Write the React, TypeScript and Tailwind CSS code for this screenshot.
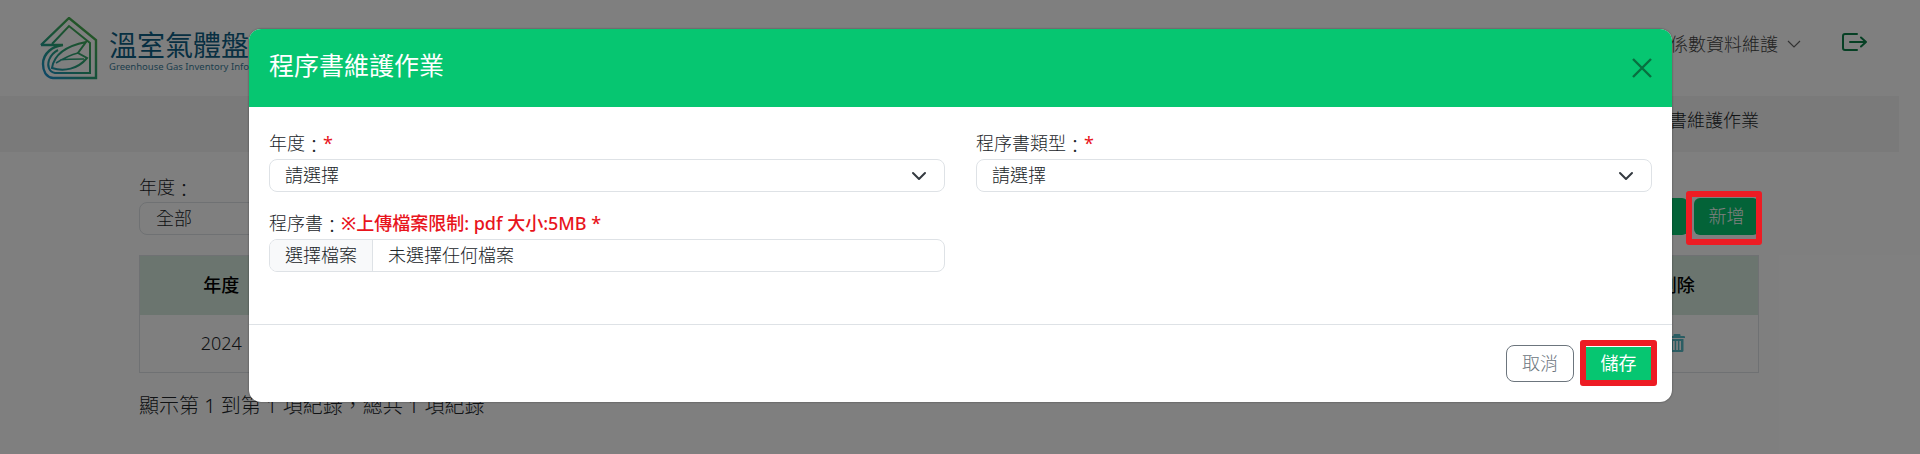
import React from "react";

function SelectChevron() {
  return (
    <svg viewBox="0 0 16 16" className="h-4 w-4 shrink-0" fill="none" stroke="#343a40" strokeWidth="2" strokeLinecap="round" strokeLinejoin="round">
      <path d="m2 5 6 6 6-6" />
    </svg>
  );
}

function Logo() {
  return (
    <svg viewBox="0 0 58 63" className="h-[63px] w-[58px] shrink-0" fill="none" strokeWidth="2">
      <defs>
        <linearGradient id="logoGrad" gradientUnits="userSpaceOnUse" x1="4" y1="60" x2="50" y2="6">
          <stop offset="0" stopColor="#1b8fd0" />
          <stop offset="0.45" stopColor="#2aa277" />
          <stop offset="1" stopColor="#4fae45" />
        </linearGradient>
      </defs>
      <path d="M1 28 L29 1 L56 23 V61 H13 C6 60 3 54 3 47 C3 36 13 29 23 28 L1 28" stroke="url(#logoGrad)" strokeWidth="2.400" />
      <path d="M12 27 L29 9 L50 26 V56 H15 C9 55 7 49 9 43 C11 38 14 35 18 33" stroke="url(#logoGrad)" />
      <path d="M12 51 C14 38 26 29 46 25 L38 36 L47 41 C38 52 24 55 12 51 Z" stroke="url(#logoGrad)" />
      <path d="M16 46 C24 41 30 38 38 36 M20 43 C28 42 36 42 44 42" stroke="url(#logoGrad)" strokeWidth="1.500" />
    </svg>
  );
}

// the colon sits lower in the reference than in the CJK font here
function Colon() {
  return <span className="inline-block translate-y-[3px]">：</span>;
}

function FormLabel({ children }: { children: React.ReactNode }) {
  return <label className="mb-[4px] block text-[18px] leading-[24px] text-[#212529]">{children}</label>;
}

function SelectBox() {
  return (
    <div className="flex h-[33px] items-center justify-between rounded-[8px] border border-[#dee2e6] bg-white pl-[15px] pr-[17px] text-[18px] text-[#212529]">
      <span>請選擇</span>
      <SelectChevron />
    </div>
  );
}

export default function App() {
  return (
    <div lang="zh-TW" className="relative h-[454px] w-[1920px] overflow-hidden bg-white font-['Noto_Sans','Noto_Sans_CJK_TC',sans-serif] font-light text-[#212529]">
      {/* page behind the dialog */}
      <header className="flex h-[96px] items-center pl-[40px] pr-[53px]">
        <Logo />
        <div className="ml-[11px] mt-[6px]">
          <div className="whitespace-nowrap text-[28px] font-normal leading-[32px] text-[#0f5f85]">溫室氣體盤查資訊</div>
          <div className="whitespace-nowrap text-[9.500px] font-normal leading-[12px] text-[#3a7c99]">Greenhouse Gas Inventory Information System</div>
        </div>
        <div className="ml-auto flex items-center pb-[8px]">
          <span className="text-[18px] text-[#444]">排放係數資料維護</span>
          <svg viewBox="0 0 16 16" className="ml-[8px] h-[16px] w-[16px]" fill="none" stroke="#666" strokeWidth="1.200">
            <path d="m2 5 6 6 6-6" />
          </svg>
          <svg viewBox="0 0 25 18" className="ml-[40px] -mt-[4px] h-[18px] w-[25px]" fill="none" stroke="#0d8049" strokeWidth="2" strokeLinecap="round" strokeLinejoin="round">
            <path d="M15 1H3a2 2 0 0 0-2 2v12a2 2 0 0 0 2 2h12" />
            <path d="M8 9h16M19 4.500 24 9l-5 4.500" />
          </svg>
        </div>
      </header>
      <div className="mr-[21px] flex h-[56px] items-center justify-end bg-[#f5f5f5] pb-[7px] pr-[140px] text-[18px] text-[#212529]">
        程序書維護作業
      </div>
      <main className="pl-[139px] pr-[161px] pt-[22px]">
        <div className="flex items-end justify-between">
          <div>
            <div className="mb-[2px] text-[18px] leading-[26px]">年度<Colon /></div>
            <div className="flex h-[33px] w-[300px] items-center rounded-[8px] border border-[#dee2e6] pl-[16px] text-[18px]">全部</div>
          </div>
          <div className="flex gap-[6px]">
            <button className="h-[37px] w-[65px] rounded-[6px] bg-[#06c671] text-white">匯出</button>
            <button className="h-[37px] w-[65px] rounded-[6px] bg-[#06c671] text-[18px] text-white">新增</button>
          </div>
        </div>
        <table className="mt-[20px] w-full table-fixed border border-[#dee2e6] text-center">
          <thead>
            <tr className="h-[59px] bg-[#d7ebdf] text-[18px] text-black">
              <th className="w-[163px] font-medium">年度</th>
              <th className="font-medium">程序書類型</th>
              <th className="w-[163px] font-medium">刪除</th>
            </tr>
          </thead>
          <tbody>
            <tr className="h-[58px] text-[18px]">
              <td>2024</td>
              <td>溫室氣體盤查程序書</td>
              <td>
                <svg viewBox="0 0 16 18" className="mx-auto h-[18px] w-[16px]" fill="#56bac6">
                  <path d="M5.500 0h5a1 1 0 0 1 1 1v1H15a1 1 0 0 1 1 1v1H0V3a1 1 0 0 1 1-1h3.500V1a1 1 0 0 1 1-1z" />
                  <path d="M1.500 5h13v11.500a1.500 1.500 0 0 1-1.500 1.500H3a1.500 1.500 0 0 1-1.500-1.500zM4 7v9h1.700V7zm3.200 0v9h1.700V7zm3.200 0v9H12V7z" fillRule="evenodd" />
                </svg>
              </td>
            </tr>
          </tbody>
        </table>
        <p className="mt-[18px] text-[20px]">顯示第 1 到第 1 項紀錄，總共 1 項紀錄</p>
      </main>

      {/* backdrop and dialog */}
      <div className="absolute inset-0 bg-black/50">
        <div className="ml-[249px] mt-[29px] w-[1423px] overflow-hidden rounded-[12px] bg-white shadow-[0_0_2px_rgba(0,0,0,0.5)]">
          <div className="flex h-[78px] items-center justify-between bg-[#06c671] px-[20px]">
            <h2 className="pb-[4px] text-[25px] font-normal text-white">程序書維護作業</h2>
            <svg viewBox="0 0 20 20" className="h-[20px] w-[20px]" fill="none" stroke="#087040" strokeWidth="2.400">
              <path d="M1 1l18 18M19 1 1 19" />
            </svg>
          </div>
          <div className="grid h-[217px] grid-cols-2 content-start gap-x-[31px] gap-y-[19px] px-[20px] pt-[24px]">
            <div>
              <FormLabel>
                年度<Colon /><span className="font-normal text-[#e8141c]">*</span>
              </FormLabel>
              <SelectBox />
            </div>
            <div>
              <FormLabel>
                程序書類型<Colon /><span className="font-normal text-[#e8141c]">*</span>
              </FormLabel>
              <SelectBox />
            </div>
            <div>
              <FormLabel>
                程序書<Colon /><span className="font-medium text-[#e8141c]">※上傳檔案限制: pdf 大小:5MB *</span>
              </FormLabel>
              <div className="flex h-[33px] items-center overflow-hidden rounded-[8px] border border-[#dee2e6] text-[18px]">
                <span className="flex h-full items-center border-r border-[#dee2e6] bg-[#f8f9fa] px-[15px]">選擇檔案</span>
                <span className="pl-[15px]">未選擇任何檔案</span>
              </div>
            </div>
          </div>
          <div className="flex h-[78px] items-center justify-end gap-[12px] border-t border-[#dee2e6] pr-[21px]">
            <button className="h-[37px] w-[68px] rounded-[8px] border border-[#6c757d] text-[18px] text-[#6c757d]">取消</button>
            <button className="h-[34px] w-[65px] bg-[#06c671] text-[18px] font-normal text-white">儲存</button>
          </div>
        </div>
      </div>

      {/* red annotation frames */}
      <div className="absolute left-[1686px] top-[191px] h-[54px] w-[76px] rounded-[3px] border-[6px] border-[#ed1c24]" />
      <div className="absolute left-[1580px] top-[340px] h-[46px] w-[77px] rounded-[3px] border-[6px] border-[#ed1c24]" />
    </div>
  );
}
